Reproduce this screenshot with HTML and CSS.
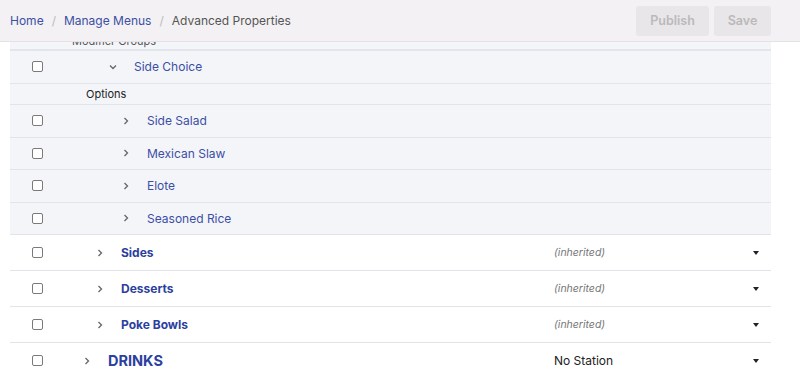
FILE: index.html
```html
<!DOCTYPE html>
<html lang="en">
<head>
  <meta charset="UTF-8" />
  <title>Advanced Properties</title>
  <link rel="stylesheet" href="styles.css">
</head>
<body>
  <header class="topbar">
    <nav class="crumbs">
      <a href="#">Home</a>
      <span class="sep">/</span>
      <a href="#">Manage Menus</a>
      <span class="sep">/</span>
      <span class="current">Advanced Properties</span>
    </nav>
    <div class="actions">
      <button class="btn publish" disabled>Publish</button>
      <button class="btn save" disabled>Save</button>
    </div>
  </header>

  <div class="table">
    <div class="clip"><span>Modifier Groups</span></div>

    <div class="row sub">
      <div class="check"><span class="box"></span></div>
      <div class="name lvl2">
        <span class="chev down"><svg width="8" height="6" viewBox="0 0 8 6"><path d="M1 1.5 L4 4.5 L7 1.5" fill="none" stroke="#666" stroke-width="1.3"/></svg></span>
        <a href="#">Side Choice</a>
      </div>
    </div>

    <div class="row sub label">Options</div>

    <div class="row sub">
      <div class="check"><span class="box"></span></div>
      <div class="name lvl3">
        <span class="chev"><svg width="6" height="8" viewBox="0 0 6 8"><path d="M1.5 1 L4.5 4 L1.5 7" fill="none" stroke="#666" stroke-width="1.3"/></svg></span>
        <a href="#">Side Salad</a>
      </div>
    </div>
    <div class="row sub">
      <div class="check"><span class="box"></span></div>
      <div class="name lvl3">
        <span class="chev"><svg width="6" height="8" viewBox="0 0 6 8"><path d="M1.5 1 L4.5 4 L1.5 7" fill="none" stroke="#666" stroke-width="1.3"/></svg></span>
        <a href="#">Mexican Slaw</a>
      </div>
    </div>
    <div class="row sub">
      <div class="check"><span class="box"></span></div>
      <div class="name lvl3">
        <span class="chev"><svg width="6" height="8" viewBox="0 0 6 8"><path d="M1.5 1 L4.5 4 L1.5 7" fill="none" stroke="#666" stroke-width="1.3"/></svg></span>
        <a href="#">Elote</a>
      </div>
    </div>
    <div class="row sub">
      <div class="check"><span class="box"></span></div>
      <div class="name lvl3">
        <span class="chev"><svg width="6" height="8" viewBox="0 0 6 8"><path d="M1.5 1 L4.5 4 L1.5 7" fill="none" stroke="#666" stroke-width="1.3"/></svg></span>
        <a href="#">Seasoned Rice</a>
      </div>
    </div>

    <div class="row cat">
      <div class="check"><span class="box"></span></div>
      <div class="name lvl1">
        <span class="chev"><svg width="6" height="8" viewBox="0 0 6 8"><path d="M1.5 1 L4.5 4 L1.5 7" fill="none" stroke="#666" stroke-width="1.3"/></svg></span>
        <a href="#">Sides</a>
      </div>
      <div class="station inherited">(inherited)</div>
      <div class="caret"></div>
    </div>
    <div class="row cat">
      <div class="check"><span class="box"></span></div>
      <div class="name lvl1">
        <span class="chev"><svg width="6" height="8" viewBox="0 0 6 8"><path d="M1.5 1 L4.5 4 L1.5 7" fill="none" stroke="#666" stroke-width="1.3"/></svg></span>
        <a href="#">Desserts</a>
      </div>
      <div class="station inherited">(inherited)</div>
      <div class="caret"></div>
    </div>
    <div class="row cat">
      <div class="check"><span class="box"></span></div>
      <div class="name lvl1">
        <span class="chev"><svg width="6" height="8" viewBox="0 0 6 8"><path d="M1.5 1 L4.5 4 L1.5 7" fill="none" stroke="#666" stroke-width="1.3"/></svg></span>
        <a href="#">Poke Bowls</a>
      </div>
      <div class="station inherited">(inherited)</div>
      <div class="caret"></div>
    </div>
    <div class="row menu">
      <div class="check"><span class="box"></span></div>
      <div class="name lvl0">
        <span class="chev"><svg width="6" height="8" viewBox="0 0 6 8"><path d="M1.5 1 L4.5 4 L1.5 7" fill="none" stroke="#666" stroke-width="1.3"/></svg></span>
        <a href="#">DRINKS</a>
      </div>
      <div class="station">No Station</div>
      <div class="caret"></div>
    </div>
  </div>
</body>
</html>
```

FILE: styles.css
```css
body {
  margin: 0;
  font-family: Inter, "Noto Sans", sans-serif;
  font-size: 12px;
  color: #333;
  background: #fff;
  overflow: hidden;
}
a {
  text-decoration: none;
  color: #3b4fa5;
}

/* top bar */
.topbar {
  height: 42px;
  box-sizing: border-box;
  display: flex;
  align-items: center;
  justify-content: space-between;
  padding: 0 29px 0 10px;
  background: #f3f1f3;
  border-bottom: 1px solid #e4e2e4;
}
.crumbs {
  display: flex;
  align-items: center;
  gap: 8px;
  font-size: 12px;
}
.crumbs .sep {
  color: #bdbbbd;
}
.crumbs .current {
  color: #555;
}
.actions {
  display: flex;
  gap: 5px;
}
.btn {
  height: 30px;
  border: none;
  border-radius: 3px;
  background: #e8e6e8;
  color: #bbb9bb;
  font-family: inherit;
  font-size: 12.5px;
  font-weight: 600;
}
.btn.publish {
  width: 73px;
}
.btn.save {
  width: 57px;
}

/* table */
.table {
  margin: 0 29px 0 10px;
}
.clip {
  height: 7px;
  overflow: hidden;
  display: flex;
  align-items: flex-end;
  padding-left: 62px;
  font-size: 11px;
  color: #555;
  background: #f4f5f9;
  border-bottom: 2px solid #e3e5ec;
}
.clip span {
  line-height: 11px;
  margin-bottom: 2.5px;
}
.row {
  display: flex;
  align-items: center;
  box-sizing: border-box;
  border-bottom: 1px solid #e3e4ea;
}
.row.sub {
  background: #f4f5f9;
  height: 32.5px;
}
.row.label {
  height: 21.5px;
  padding-left: 76px;
  font-size: 11px;
  color: #222;
}
.row.cat, .row.menu {
  height: 36px;
}
.check {
  width: 52px;
  padding-left: 22px;
  box-sizing: border-box;
  display: flex;
  align-items: center;
}
.box {
  width: 9px;
  height: 9px;
  border: 1.5px solid #7a7a7a;
  border-radius: 2px;
  background: #fff;
}
.name {
  flex: 1;
  display: flex;
  align-items: center;
}
.chev {
  width: 24px;
  display: flex;
  align-items: center;
}
.lvl0 { padding-left: 22px; }
.lvl1 { padding-left: 35px; }
.lvl2 { padding-left: 48px; }
.lvl3 { padding-left: 61px; }
.chev.down {
  margin-left: -1px;
  width: 25px;
}
.cat .name a {
  font-weight: 700;
  color: #2b3f9e;
}
.menu .name a {
  font-weight: 700;
  font-size: 14.5px;
  color: #2b3f9e;
}
.station {
  width: 199px;
  font-size: 12px;
  color: #222;
}
.station.inherited {
  font-style: italic;
  font-size: 10.5px;
  color: #777;
}
.caret {
  width: 18px;
  display: flex;
}
.caret::before {
  content: "";
  border-left: 3.5px solid transparent;
  border-right: 3.5px solid transparent;
  border-top: 4px solid #222;
}
```
